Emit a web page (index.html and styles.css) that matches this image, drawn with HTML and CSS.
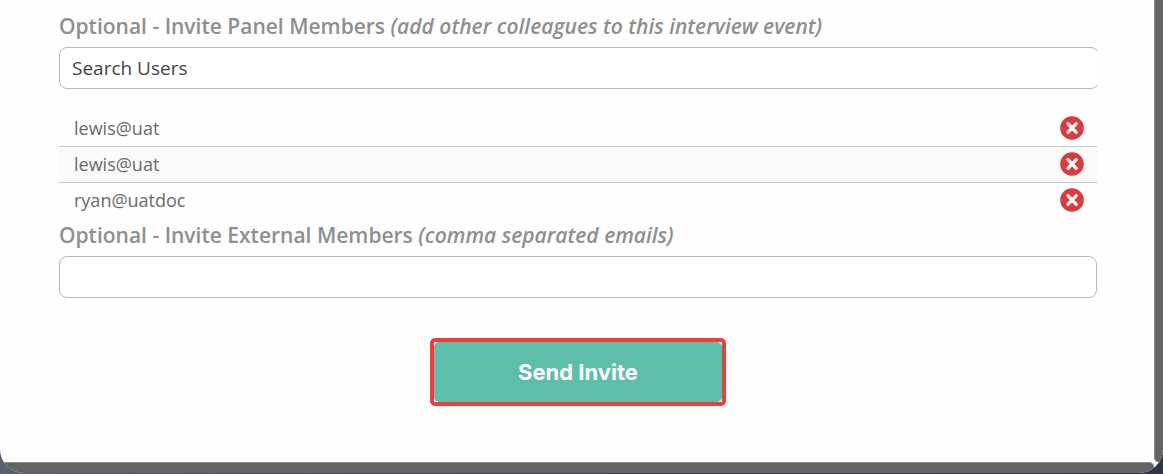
FILE: index.html
```html
<!DOCTYPE html>
<html lang="en">
<head>
    <meta charset="UTF-8">
    <meta name="viewport" content="width=device-width, initial-scale=1.0">
    <title>Invite Members</title>
    <link rel="stylesheet" href="styles.css">
</head>
<body>
    <svg width="0" height="0" class="sprite" aria-hidden="true">
        <symbol id="remove-icon" viewBox="0 0 24 24">
            <circle cx="12" cy="12" r="11.8" fill="#dc3a3c"/>
            <path d="M8 7.6l8.2 8.8M16.2 7.6L8 16.4" stroke="#fff" stroke-width="3.2" stroke-linecap="round"/>
        </symbol>
    </svg>

    <div class="modal">
        <form class="modal-content">
            <label class="field-label" for="searchUsers">Optional - Invite Panel Members <em>(add other colleagues to this interview event)</em></label>
            <div class="search-box">
                <input class="field-input" type="text" id="searchUsers" placeholder="Search Users">
            </div>

            <table class="members">
                <tbody>
                    <tr>
                        <td>lewis@uat</td>
                        <td class="action"><button type="button" class="remove" aria-label="Remove"><svg><use href="#remove-icon"/></svg></button></td>
                    </tr>
                    <tr>
                        <td>lewis@uat</td>
                        <td class="action"><button type="button" class="remove" aria-label="Remove"><svg><use href="#remove-icon"/></svg></button></td>
                    </tr>
                    <tr>
                        <td>ryan@uatdoc</td>
                        <td class="action"><button type="button" class="remove" aria-label="Remove"><svg><use href="#remove-icon"/></svg></button></td>
                    </tr>
                </tbody>
            </table>

            <label class="field-label" for="externalMembers">Optional - Invite External Members <em>(comma separated emails)</em></label>
            <input class="field-input" type="text" id="externalMembers">

            <div class="send-row">
                <div class="highlight">
                    <button type="button" class="send">Send Invite</button>
                </div>
            </div>
        </form>
        <div class="scroll-y"></div>
        <div class="scroll-x"></div>
    </div>
</body>
</html>
```
FILE: styles.css
```css
* {
    box-sizing: border-box;
}

body {
    margin: 0;
    padding-bottom: 1px;
    min-height: 100vh;
    display: flex;
    font-family: "Open Sans", "Noto Sans", sans-serif;
    background: linear-gradient(to right, #596070, #3c4350 30%, #2f3745);
}

.sprite {
    position: absolute;
}

.modal {
    flex: 1;
    display: grid;
    grid-template-columns: 1fr 9px;
    grid-template-rows: 1fr 11px;
    background-color: #fefefe;
    border-radius: 0 0 24px 24px;
    overflow: hidden;
}

.modal-content {
    padding: 9px 57px 0 59px;
}

.scroll-y {
    background-color: #646464;
    border-left: 1px solid #8a8a8a;
    border-radius: 0 0 5px 5px;
}

.scroll-x {
    background-color: #646464;
    border-top: 1px solid #8a8a8a;
    border-radius: 0 5px 5px 0;
}

.field-label {
    display: block;
    height: 38px;
    line-height: 34px;
    font-size: 21px;
    font-weight: 600;
    color: #8f8f8f;
}

.search-box {
    overflow: hidden;
}

.field-input {
    display: block;
    width: 100%;
    height: 42px;
    padding: 0 12px;
    border: 1px solid #b9b9b9;
    border-radius: 8px;
    background-color: #fff;
    font-family: inherit;
    font-size: 19px;
    color: #444;
}

/* right border is cut off by the search box */
.search-box .field-input {
    width: calc(100% + 2px);
}

.field-input::placeholder {
    color: #444;
    opacity: 1;
}

.members {
    width: 100%;
    margin-top: 21px;
    border-collapse: collapse;
    font-size: 18px;
    color: #6a6a6a;
}

.members td {
    height: 36px;
    padding: 0 15px;
}

.members tr + tr td {
    border-top: 1px solid #ccc;
}

.members tr:nth-child(even) {
    background-color: #fafafa;
}

.members .action {
    width: 49px;
    padding: 0 12px;
}

.remove {
    display: block;
    width: 24px;
    height: 24px;
    padding: 0;
    border: none;
    background: none;
    cursor: pointer;
}

.remove svg {
    display: block;
    width: 24px;
    height: 24px;
}

.send-row {
    display: flex;
    justify-content: center;
    padding: 40px 0 56px;
}

.highlight {
    border: 4px solid #f23c3c;
    border-radius: 5px;
    background-color: #fff;
}

.send {
    display: block;
    width: 288px;
    height: 60px;
    border: none;
    border-radius: 5px;
    background-color: #5dbea9;
    color: #fff;
    font-family: Inter, sans-serif;
    font-size: 22px;
    font-weight: 700;
    cursor: pointer;
}
```
